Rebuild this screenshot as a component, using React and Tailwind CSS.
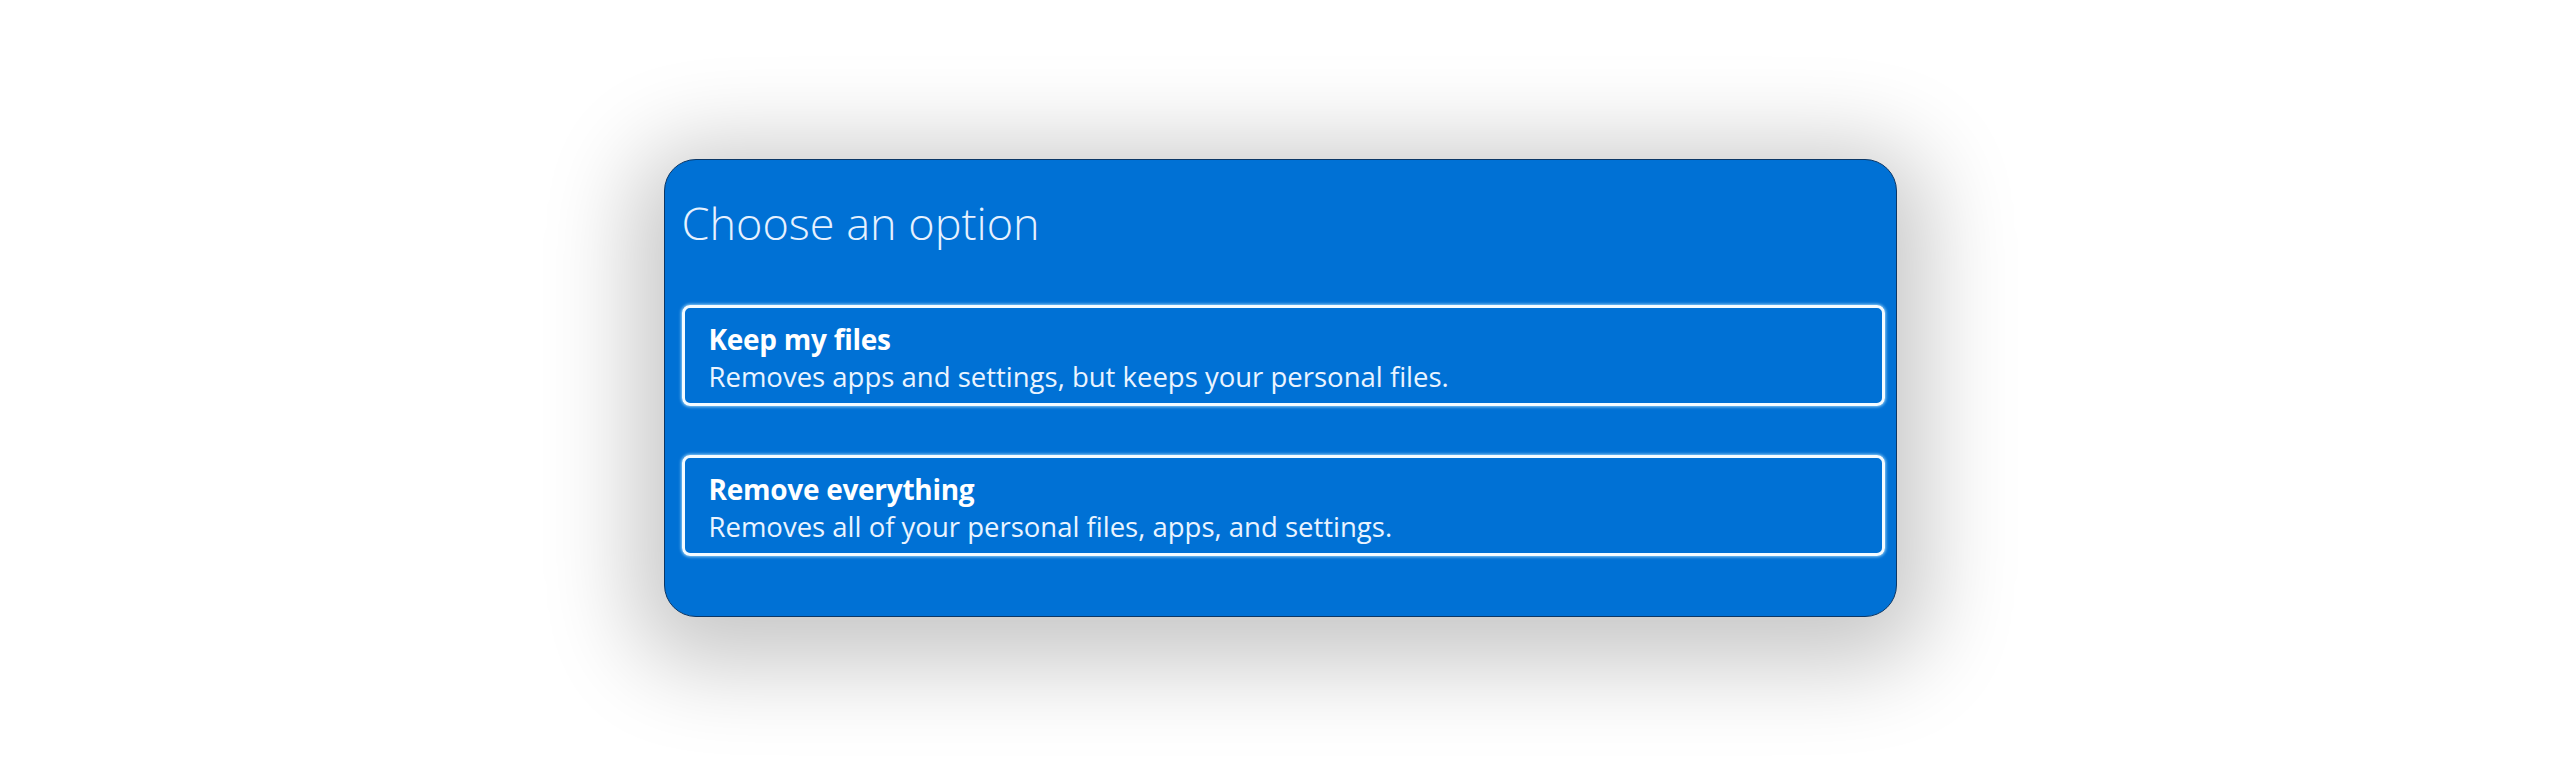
import React from "react";

const options = [
  {
    title: "Keep my files",
    desc: "Removes apps and settings, but keeps your personal files.",
  },
  {
    title: "Remove everything",
    desc: "Removes all of your personal files, apps, and settings.",
  },
];

function OptionBox({ title, desc }) {
  return (
    <div className="border-[3px] border-[#f4fbff] rounded-[8px] shadow-[0_0_3px_1px_rgba(170,225,255,0.8)] pl-[24px] pr-4 pt-[12px] pb-[7px] text-white">
      <h2 className="text-[28px] leading-[38px] font-bold tracking-[-0.01em]">{title}</h2>
      <p className="text-[27.5px] leading-[38px] text-[#eaf4ff]">{desc}</p>
    </div>
  );
}

export default function App() {
  return (
    <section className="h-[775px] w-full bg-white flex items-center justify-center font-['Open_Sans',sans-serif]">
      {/* Reset dialog card */}
      <div className="w-[1233px] h-[458px] bg-[#0071d5] rounded-[32px] border border-[#0b3766] shadow-[0_18px_90px_30px_rgba(0,0,0,0.22)] pt-[35px] pl-[17px] pr-[11px]">
        <h1 className="text-[45px] leading-[55px] font-light text-[#e6f1ff]">
          Choose an option
        </h1>
        <div className="mt-[55px] flex flex-col gap-[49px]">
          {options.map((o) => (
            <OptionBox key={o.title} title={o.title} desc={o.desc} />
          ))}
        </div>
      </div>
    </section>
  );
}
